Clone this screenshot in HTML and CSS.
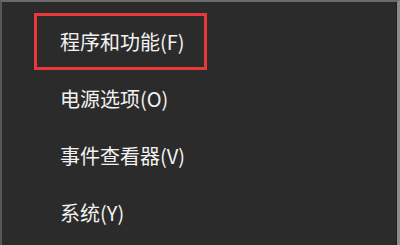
FILE: index.html
```html
<!DOCTYPE html>
<html lang="zh-CN">
<head>
<meta charset="utf-8">
<link rel="stylesheet" href="styles.css">
</head>
<body>
<div class="frame">
  <ul class="menu">
    <li class="item selected">程序和功能(F)</li>
    <li class="item">电源选项(O)</li>
    <li class="item">事件查看器(V)</li>
    <li class="item">系统(Y)</li>
  </ul>
</div>
</body>
</html>
```

FILE: styles.css
```css
html, body {
  margin: 0;
  padding: 0;
  background: #2b2b2b;
}
.frame {
  box-sizing: border-box;
  width: 400px;
  height: 245px;
  background: #2b2b2b;
  border-top: 2px solid #6a6a6a;
  border-left: 2px solid #585858;
  border-right: 3px solid #8c8c8c;
  box-shadow: inset -1px 0 0 #1f1f1f;
  overflow: hidden;
}
.menu {
  list-style: none;
  margin: 0;
  padding: 11px 0 0 32px;
  display: flex;
  flex-direction: column;
}
.item {
  box-sizing: border-box;
  width: 173px;
  height: 57px;
  border: 3px solid transparent;
  padding-left: 23px;
  display: flex;
  align-items: center;
  font-family: "Noto Sans CJK SC", "Noto Sans", sans-serif;
  font-size: 20px;
  color: #f2f2f2;
  white-space: nowrap;
}
.selected {
  border-color: #e8383c;
}
```
